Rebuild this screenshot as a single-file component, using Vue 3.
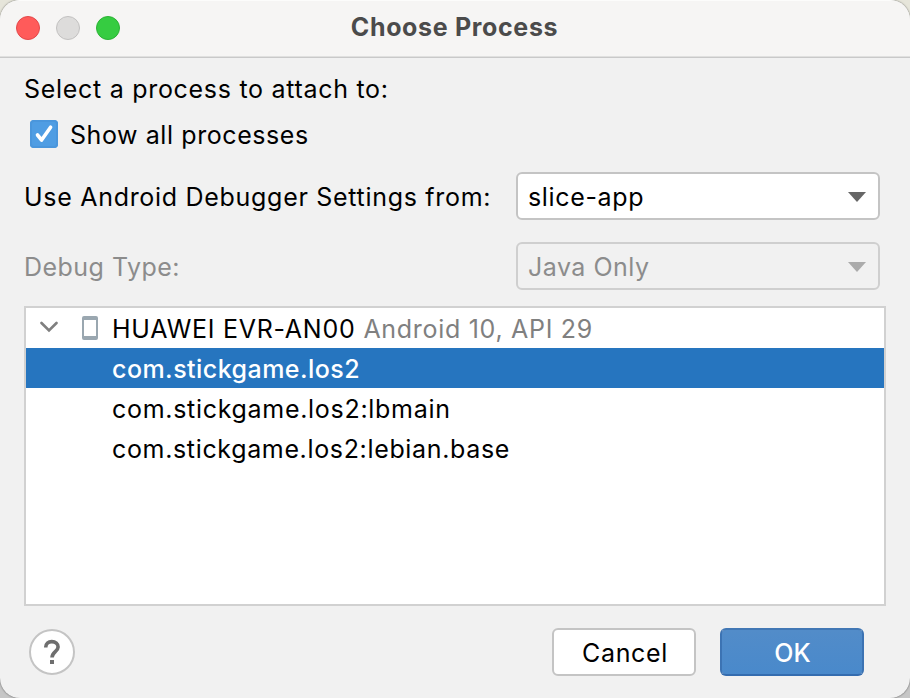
<script setup>
import { ref } from 'vue'

const showAll = ref(true)
const selected = ref(0)
const processes = [
  { name: 'com.stickgame.los2', cls: 'main' },
  { name: 'com.stickgame.los2:lbmain', cls: 'lbmain' },
  { name: 'com.stickgame.los2:lebian.base', cls: 'lebian' }
]
</script>

<template>
  <div class="desktop">
    <div class="window">
      <header class="titlebar">
        <div class="lights">
          <span class="light close"></span>
          <span class="light minimize"></span>
          <span class="light zoom"></span>
        </div>
        <h1 class="title">Choose Process</h1>
      </header>

      <main class="content">
        <div class="prompt">Select a process to attach to:</div>
        <div class="check-row" @click="showAll = !showAll">
          <span class="checkbox">
            <svg v-if="showAll" width="28" height="28" viewBox="0 0 28 28">
              <path d="M7.5 15 11.6 20 20.6 7.200" fill="none" stroke="#fff" stroke-width="3.6" stroke-linecap="round" stroke-linejoin="round" />
            </svg>
          </span>
          <span class="check-label">Show all processes</span>
        </div>

        <div class="field">
          <span class="label settings">Use Android Debugger Settings from:</span>
          <div class="combo">
            <span class="value slice">slice-app</span>
            <svg class="arrow" width="18" height="10" viewBox="0 0 18 10"><path d="M0 0H18L9 10Z" fill="#666" /></svg>
          </div>
        </div>
        <div class="field disabled">
          <span class="label debug">Debug Type:</span>
          <div class="combo">
            <span class="value java">Java Only</span>
            <svg class="arrow" width="18" height="10" viewBox="0 0 18 10"><path d="M0 0H18L9 10Z" fill="#ababab" /></svg>
          </div>
        </div>

        <div class="tree">
          <div class="row device">
            <svg class="chevron" width="18" height="12" viewBox="0 0 18 12">
              <path d="M1.5 2 9 9.500 16.500 2" fill="none" stroke="#7f7f7f" stroke-width="2.6" stroke-linecap="round" />
            </svg>
            <svg class="phone" width="16" height="24" viewBox="0 0 16 24">
              <path fill="#9aa7b0" fill-rule="evenodd" d="M2 0H14A2 2 0 0 1 16 2V22A2 2 0 0 1 14 24H2A2 2 0 0 1 0 22V2A2 2 0 0 1 2 0ZM2 4V20H14V4Z" />
            </svg>
            <span class="device-name">HUAWEI EVR-AN00</span>
            <span class="device-info">Android 10, API 29</span>
          </div>
          <div
            v-for="(p, i) in processes"
            :key="p.name"
            class="row process"
            :class="[p.cls, { selected: i === selected }]"
            @click="selected = i"
          >{{ p.name }}</div>
        </div>

        <footer class="footer">
          <button class="help" aria-label="Help">
            <svg width="18" height="26" viewBox="0 0 18 26">
              <path d="M2.700 8.500C2.700 4.500 5.300 2.600 8.800 2.600C12.500 2.600 15.100 4.700 15.100 8C15.100 12.500 9 13 9 18.600" fill="none" stroke="#6e6e6e" stroke-width="3.600" />
              <rect x="7" y="21" width="4" height="4" fill="#6e6e6e" />
            </svg>
          </button>
          <button class="btn cancel">Cancel</button>
          <button class="btn ok">OK</button>
        </footer>
      </main>
    </div>
  </div>
</template>

<style>
body {
  margin: 0;
  overflow: hidden;
}
</style>

<style scoped>
.desktop {
  width: 910px;
  height: 698px;
  background: linear-gradient(#e6e5da 0, #e6e5da 50%, #c6c6c6 50%);
  font: 400 25px/40px Inter, "Liberation Sans", sans-serif;
  color: #000;
}

.window {
  box-sizing: border-box;
  height: 698px;
  display: flex;
  flex-direction: column;
  overflow: hidden;
  border-radius: 20px;
  background: #f1f1f1;
  box-shadow: 0 0 2px rgba(0, 0, 0, 0.6);
}

.titlebar {
  box-sizing: border-box;
  height: 58px;
  flex: none;
  display: grid;
  grid-template-columns: 1fr auto 1fr;
  align-items: start;
  padding: 0 17px 0 16px;
  background: linear-gradient(#fcfcfb 0, #fcfcfb 1px, #f6f5f4 1px, #f6f5f4 56px, #e0e0df 56px, #e0e0df 57px, #c9c9c9 57px);
}

.lights {
  display: flex;
  gap: 16px;
  padding-top: 16px;
}

.light {
  box-sizing: border-box;
  width: 24px;
  height: 24px;
  border: 1px solid;
  border-radius: 50%;
}

.close {
  background: #ff5b5a;
  border-color: #e2484a;
}

.minimize {
  background: #dddcdb;
  border-color: #c2c1c0;
}

.zoom {
  background: #36cc41;
  border-color: #2bb234;
}

.title {
  margin: 0;
  padding-top: 7px;
  font-size: 25px;
  font-weight: 700;
  line-height: 40px;
  letter-spacing: 0.66px;
  color: #4b4b4b;
  white-space: nowrap;
}

.content {
  flex: 1;
  display: flex;
  flex-direction: column;
  padding: 11px 24px 0;
}

.prompt {
  letter-spacing: 0.707px;
}

.check-row {
  display: flex;
  align-items: center;
  height: 50px;
  gap: 12px;
  padding-left: 6px;
}

.checkbox {
  box-sizing: border-box;
  width: 28px;
  height: 28px;
  border-radius: 4px;
  background: #4f9de3;
  box-shadow: inset 0 0 0 2px #4a96dc;
}

.checkbox svg {
  display: block;
}

.check-label {
  padding-top: 2px;
  letter-spacing: 0.58px;
}

.field {
  display: flex;
  justify-content: space-between;
  align-items: center;
  height: 48px;
  margin: 13px 6px 22px 0;
}

.field.disabled {
  margin: 0 6px 16px 0;
  color: #8c8c8c;
}

.label,
.value {
  padding-top: 2px;
}

.settings {
  letter-spacing: 0.703px;
}

.debug {
  letter-spacing: 0.472px;
}

.slice {
  letter-spacing: 0.65px;
}

.java {
  letter-spacing: 0.5px;
}

.combo {
  box-sizing: border-box;
  width: 364px;
  height: 48px;
  display: flex;
  align-items: center;
  justify-content: space-between;
  padding: 0 12px 0 10px;
  border: 2px solid #c4c4c4;
  border-radius: 6px;
  background: #fff;
}

.disabled .combo {
  border-color: #cfcfcf;
  background: #f1f1f1;
}

.arrow {
  margin-top: 2px;
}

.tree {
  box-sizing: border-box;
  width: 862px;
  height: 300px;
  border: 2px solid #d1d1d1;
  background: #fff;
}

.row {
  box-sizing: border-box;
  height: 40px;
  line-height: 42px;
  white-space: nowrap;
}

.device {
  display: flex;
  align-items: center;
  padding-left: 14px;
}

.chevron {
  margin-right: 24px;
  margin-top: -2px;
}

.phone {
  margin-right: 14px;
}

.device-name,
.device-info {
  padding-top: 2px;
}

.device-name {
  margin-right: 8px;
  letter-spacing: 0.72px;
}

.device-info {
  letter-spacing: 0.7px;
  color: #808080;
}

.process {
  padding-left: 86px;
}

.main {
  letter-spacing: 0.71px;
}

.lbmain {
  letter-spacing: 0.7px;
}

.lebian {
  letter-spacing: 0.656px;
}

.selected {
  background: #2675bf;
  color: #fff;
  font-weight: 500;
  letter-spacing: 0.46px;
}

.footer {
  display: flex;
  align-items: center;
  height: 48px;
  margin-top: 22px;
  padding: 0 22px 0 5px;
}

.help {
  box-sizing: border-box;
  width: 46px;
  height: 46px;
  display: flex;
  align-items: center;
  justify-content: center;
  margin: 0 auto 0 0;
  padding: 0;
  border: 2px solid #c4c4c4;
  border-radius: 50%;
  background: #fff;
}

.btn {
  box-sizing: border-box;
  width: 144px;
  height: 48px;
  padding: 2px 0 0;
  border: 2px solid #c4c4c4;
  border-radius: 6px;
  background: #fff;
  color: #000;
  font: inherit;
}

.cancel {
  padding-left: 2px;
  letter-spacing: 0.674px;
}

.ok {
  margin-left: 24px;
  padding-left: 1px;
  border-color: #4278b5 #3c73b3 #346caf;
  background: linear-gradient(#528cc9, #4989cb) padding-box;
  background-color: #3e74b3;
  color: #fff;
  font-weight: 500;
}
</style>
